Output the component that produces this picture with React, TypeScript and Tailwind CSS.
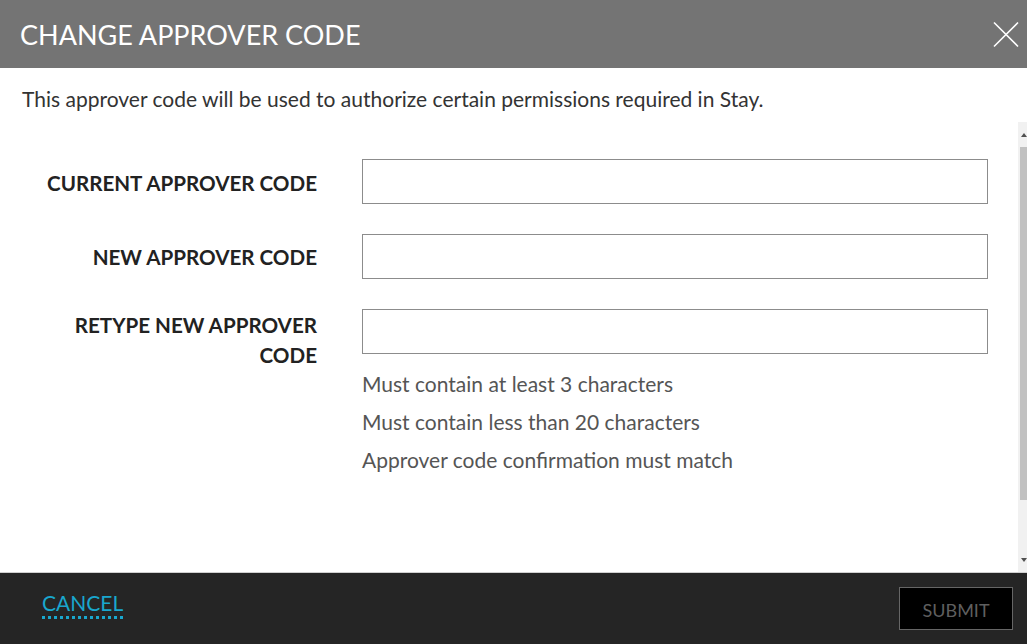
const rules = [
  "Must contain at least 3 characters",
  "Must contain less than 20 characters",
  "Approver code confirmation must match",
];

function Field({ label, top }: { label: React.ReactNode; top: string }) {
  return (
    <div className="flex items-start">
      <label className={`w-[295px] shrink-0 text-right text-[20.6px] leading-[30px] font-bold text-[#222] ${top}`}>
        {label}
      </label>
      <input
        type="password"
        className="ml-[45px] h-[45px] w-[626px] border border-[#8c8c8c] bg-white outline-none"
      />
    </div>
  );
}

export default function App() {
  return (
    <div className="flex h-[644px] w-[1027px] flex-col overflow-hidden bg-white font-['Lato','Liberation_Sans',sans-serif]">
      {/* Header */}
      <div className="flex h-[68px] shrink-0 items-center justify-between bg-[#747474] pl-[20px] pr-[8px]">
        <h1 className="text-[27px] leading-none text-white">CHANGE APPROVER CODE</h1>
        <button className="text-white">
          <svg width="26" height="27" viewBox="0 0 26 27" fill="none" stroke="currentColor" strokeWidth="1.6">
            <path d="M1 1.5L25 25.5M25 1.5L1 25.5" />
          </svg>
        </button>
      </div>

      {/* Intro */}
      <p className="flex h-[54px] shrink-0 items-center pl-[22px] pt-[8px] text-[21px] text-[#333]">
        This approver code will be used to authorize certain permissions required in Stay.
      </p>

      {/* Scroll area */}
      <div className="flex min-h-0 flex-1">
        <div className="flex-1 pl-[22px] pt-[37px]">
          <div className="flex flex-col gap-[30px]">
            <Field label="CURRENT APPROVER CODE" top="pt-[9px]" />
            <Field label="NEW APPROVER CODE" top="pt-[8px]" />
            <div>
              <Field
                label={
                  <>
                    RETYPE NEW APPROVER
                    <br />
                    CODE
                  </>
                }
                top="pt-[1px]"
              />
              <ul className="ml-[340px] mt-[-5px] text-[21px] leading-[38px] text-[#555]">
                {rules.map((r) => (
                  <li key={r}>{r}</li>
                ))}
              </ul>
            </div>
          </div>
        </div>

        {/* Scrollbar */}
        <div className="flex w-[9px] flex-col bg-[#f1f1f1]">
          <div className="flex h-[25px] items-center justify-end">
            <div className="h-0 w-0 border-x-[3px] border-b-[4px] border-x-transparent border-b-[#505050]" />
          </div>
          <div className="ml-[2px] h-[353px] bg-[#c1c1c1]" />
          <div className="flex-1" />
          <div className="flex h-[25px] items-center justify-end">
            <div className="h-0 w-0 border-x-[3px] border-t-[4px] border-x-transparent border-t-[#505050]" />
          </div>
        </div>
      </div>

      {/* Footer */}
      <div className="flex h-[72px] shrink-0 items-center justify-between border-t border-[#d0d0d0] bg-[#252525] pl-[42px] pr-[14px]">
        <button className="mb-[8px] border-b-[3px] border-dotted border-[#19a7ce] pb-[1px] text-[21px] leading-[24px] text-[#19a7ce]">
          CANCEL
        </button>
        <button className="h-[43px] w-[114px] border border-[#666] bg-black pt-[3px] text-[18px] text-[#5f5f5f]">
          SUBMIT
        </button>
      </div>
    </div>
  );
}
